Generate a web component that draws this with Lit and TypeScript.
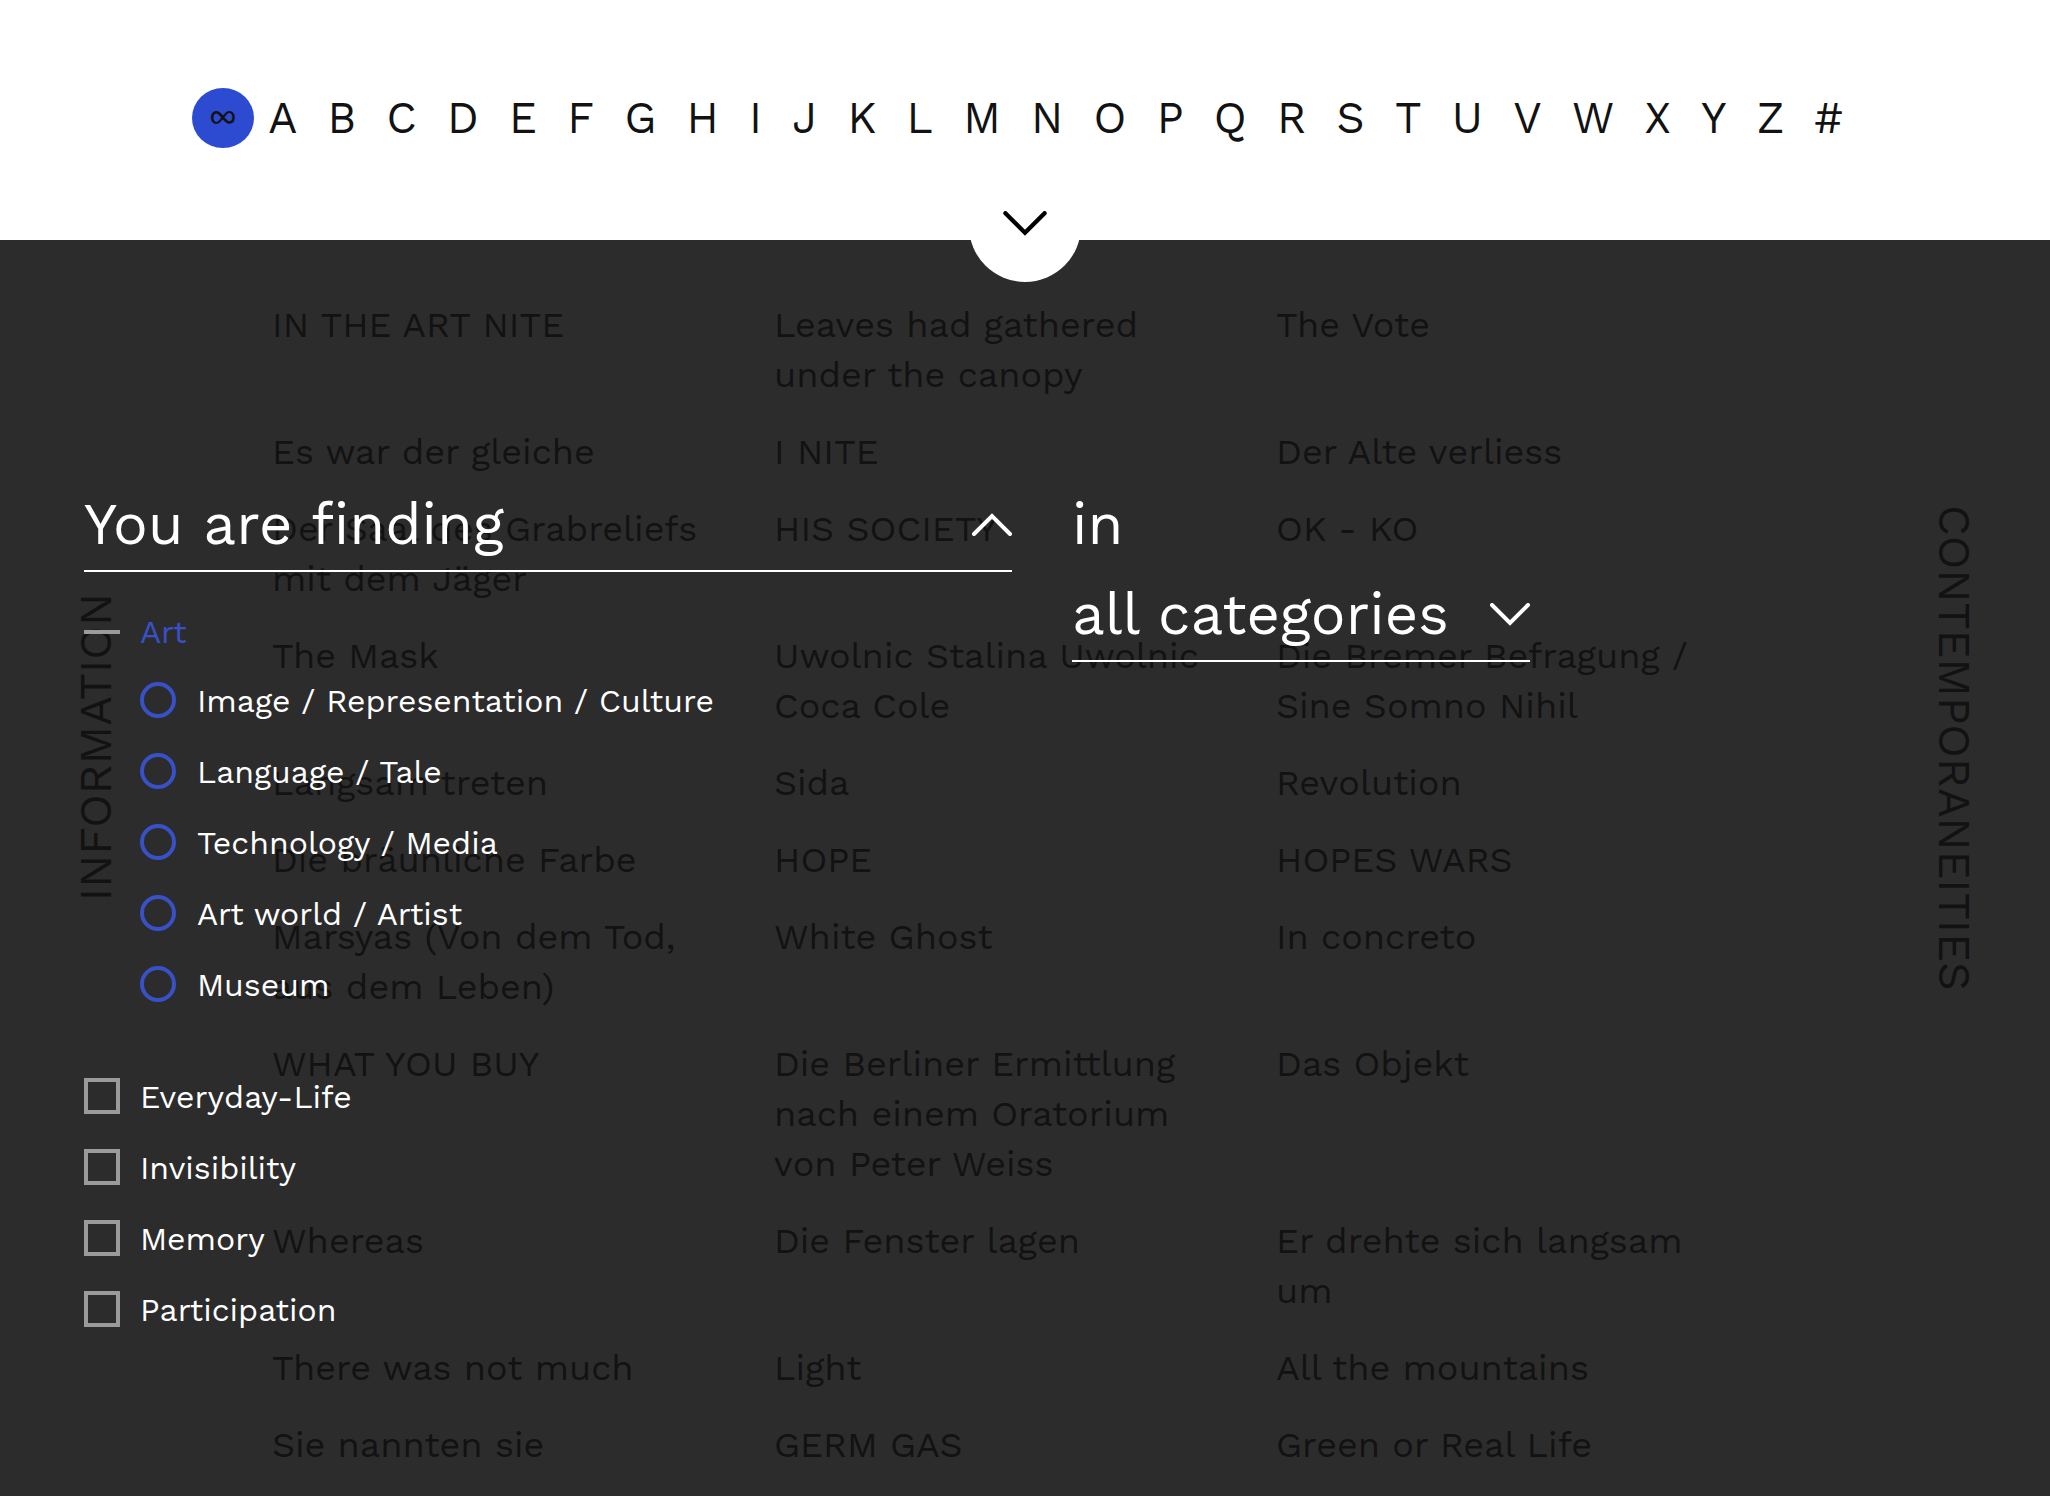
import { LitElement, html, css } from "lit";
import { customElement, state } from "lit/decorators.js";
import { classMap } from "lit/directives/class-map.js";

const INDEX = ["∞", ..."ABCDEFGHIJKLMNOPQRSTUVWXYZ", "#"];

const TITLES = [
  "IN THE ART NITE", "Leaves had gathered under the canopy", "The Vote",
  "Es war der gleiche", "I NITE", "Der Alte verliess",
  "Der Saal des Grabreliefs mit dem Jäger", "HIS SOCIETY", "OK - KO",
  "The Mask", "Uwolnic Stalina Uwolnic Coca Cole", "Die Bremer Befragung / Sine Somno Nihil",
  "Langsam treten", "Sida", "Revolution",
  "Die bräunliche Farbe", "HOPE", "HOPES WARS",
  "Marsyas (Von dem Tod, aus dem Leben)", "White Ghost", "In concreto",
  "WHAT YOU BUY", "Die Berliner Ermittlung nach einem Oratorium von Peter Weiss", "Das Objekt",
  "Whereas", "Die Fenster lagen", "Er drehte sich langsam um",
  "There was not much", "Light", "All the mountains",
  "Sie nannten sie", "GERM GAS", "Green or Real Life",
];

const ART_TOPICS = [
  "Image / Representation / Culture",
  "Language / Tale",
  "Technology / Media",
  "Art world / Artist",
  "Museum",
];

const TOPICS = ["Everyday-Life", "Invisibility", "Memory", "Participation"];

const chevron = (up = false) => html`
  <svg class=${classMap({ chevron: true, up })} viewBox="0 0 40 23" aria-hidden="true">
    <path d="M2 2 L20 20 L38 2" />
  </svg>
`;

@customElement("app-root")
export class AppRoot extends LitElement {
  @state() private letter = "∞";
  @state() private open = true;

  static styles = css`
    :host {
      display: block;
      min-height: 100vh;
      background: #2c2c2c;
      color: #121212;
      font-family: "Work Sans", Inter, "Open Sans", sans-serif;
      font-size: 36px;
      line-height: 50px;
    }
    * {
      box-sizing: border-box;
    }
    a {
      color: inherit;
      text-decoration: none;
    }
    button,
    select,
    input {
      margin: 0;
      padding: 0;
      border: 0;
      border-radius: 0;
      background: none;
      color: inherit;
      font: inherit;
      appearance: none;
      cursor: pointer;
    }
    .chevron {
      display: block;
      flex: none;
      width: 40px;
      height: 23px;
      fill: none;
      stroke: currentColor;
      stroke-width: 4;
      stroke-linecap: round;
    }
    .chevron.up {
      transform: rotate(180deg);
    }
    .header {
      position: relative;
      z-index: 2;
      height: 240px;
      padding: 88px 207px 0 192px;
      background: #fff;
    }
    .index {
      display: flex;
      justify-content: space-between;
      align-items: center;
      font-size: 44px;
      line-height: 60px;
    }
    .index .all {
      width: 62px;
      height: 60px;
      margin-right: -16px;
      padding-bottom: 4px;
      font-size: 32px;
      line-height: 56px;
    }
    .index .current {
      border-radius: 50%;
      background: #2d4bd0;
    }
    .toggle {
      position: absolute;
      left: calc(50% - 56px);
      bottom: -42px;
      display: flex;
      justify-content: center;
      width: 112px;
      height: 112px;
      padding-top: 41px;
      border-radius: 50%;
      background: #fff;
      color: #000;
    }
    .toggle .chevron {
      width: 44px;
      height: 25px;
    }
    .stage {
      display: grid;
    }
    .layer {
      grid-area: 1 / 1;
    }
    .titles {
      display: grid;
      grid-template-columns: repeat(3, 1fr);
      gap: 27px 54px;
      margin: 0;
      padding: 60px 326px 25px 272px;
      list-style: none;
    }
    .sides {
      display: flex;
      justify-content: space-between;
      align-items: center;
      padding: 0 72px 240px;
      font-size: 45px;
      line-height: 48px;
    }
    .side {
      writing-mode: vertical-rl;
    }
    .side.up {
      transform: rotate(180deg);
    }
    .filter {
      z-index: 1;
      display: grid;
      grid-template-columns: minmax(0, 928fr) minmax(0, 906fr);
      column-gap: 60px;
      align-content: start;
      padding: 240px 72px 60px 84px;
      color: #fff;
    }
    .heading {
      font-size: 58px;
      line-height: 88px;
    }
    .picker {
      display: flex;
      justify-content: space-between;
      align-items: center;
      width: 100%;
      padding-bottom: 2px;
      border-bottom: 2px solid #fff;
      text-align: left;
    }
    .where {
      display: flex;
      flex-direction: column;
      align-items: flex-start;
    }
    .where .picker {
      display: grid;
      grid-template-columns: 100%;
      width: 458px;
    }
    .where .picker select,
    .where .picker .chevron {
      grid-area: 1 / 1;
    }
    .where .picker .chevron {
      justify-self: end;
      pointer-events: none;
    }
    .where .prefix {
      padding-bottom: 2px;
    }
    .options {
      display: flex;
      flex-direction: column;
      gap: 35px;
      padding-top: 45px;
      font-size: 32px;
      line-height: 36px;
    }
    .option {
      display: flex;
      align-items: center;
      gap: 20px;
      height: 36px;
    }
    .option input {
      flex: none;
      width: 36px;
      height: 36px;
      border: 4px solid #9b9b9b;
    }
    .option .name {
      padding-top: 2px;
    }
    .option.mixed {
      height: 30px;
      color: #3850c8;
    }
    .option.mixed .name {
      padding-top: 0;
    }
    .option.mixed input {
      height: 4px;
      border: 0;
      background: #9b9b9b;
    }
    .option.nested {
      gap: 21px;
      margin-left: 56px;
    }
    .option.nested input {
      border-color: #3850c8;
      border-radius: 50%;
    }
    .option.nested input:checked {
      background: #3850c8;
    }
    .option.square input:checked {
      background: #9b9b9b;
    }
    .option.first {
      margin-top: 41px;
    }
  `;

  private topicPicker() {
    return html`
      <div>
        <button
          class="picker heading"
          aria-expanded=${this.open}
          @click=${() => (this.open = !this.open)}
        >
          You are finding ${chevron(this.open)}
        </button>
        ${this.open ? this.topicOptions() : null}
      </div>
    `;
  }

  private topicOptions() {
    return html`
      <div class="options">
        <label class="option mixed">
          <input type="checkbox" .indeterminate=${true} /><span class="name">Art</span>
        </label>
        ${ART_TOPICS.map(
          (name) => html`
            <label class="option nested">
              <input type="radio" name="art" /><span class="name">${name}</span>
            </label>
          `,
        )}
        ${TOPICS.map(
          (name, i) => html`
            <label class=${classMap({ option: true, square: true, first: i === 0 })}>
              <input type="checkbox" /><span class="name">${name}</span>
            </label>
          `,
        )}
      </div>
    `;
  }

  render() {
    return html`
      <header class="header">
        <nav class="index">
          ${INDEX.map(
            (c) => html`
              <button
                class=${classMap({ all: c === "∞", current: c === this.letter })}
                @click=${() => (this.letter = c)}
              >${c}</button>
            `,
          )}
        </nav>
        <button class="toggle" aria-expanded="true">${chevron()}</button>
      </header>
      <main class="stage">
        <ul class="layer titles">
          ${TITLES.map((t) => html`<li><a href="#">${t}</a></li>`)}
        </ul>
        <div class="layer sides">
          <a class="side up" href="#">INFORMATION</a>
          <a class="side" href="#">CONTEMPORANEITIES</a>
        </div>
        <section class="layer filter">
          ${this.topicPicker()}
          <div class="where heading">
            <label class="prefix" for="category">in</label>
            <div class="picker">
              <select id="category">
                <option>all categories</option>
              </select>
              ${chevron()}
            </div>
          </div>
        </section>
      </main>
    `;
  }
}
